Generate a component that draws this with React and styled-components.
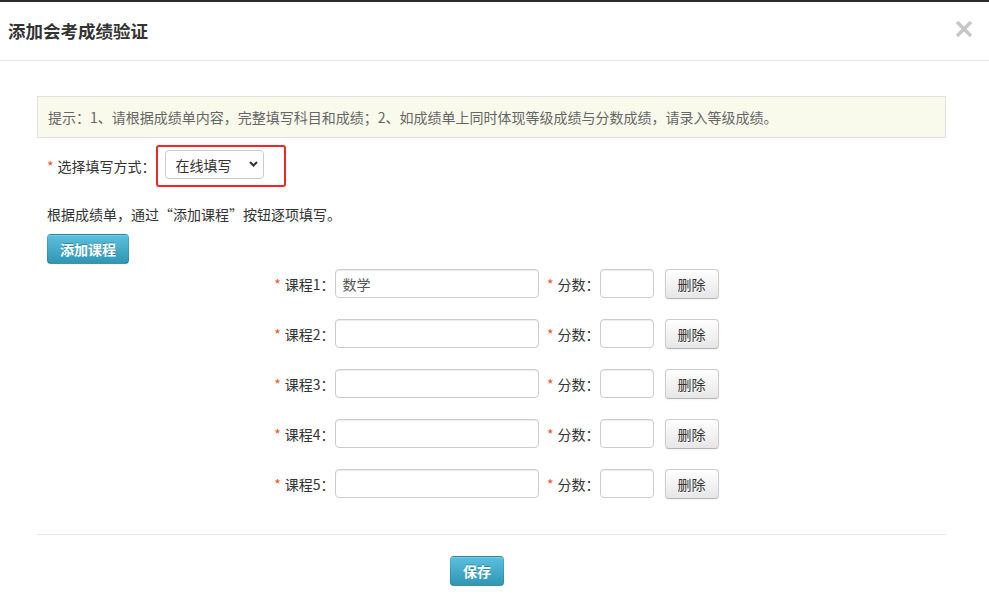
import React from 'react';
import styled, { createGlobalStyle, css } from 'styled-components';

const GlobalStyle = createGlobalStyle`
  html, body {
    margin: 0;
    padding: 0;
    background: #fff;
  }
  body {
    font-family: "Noto Sans CJK SC", "Noto Sans", sans-serif;
    font-size: 14px;
    color: #333;
  }
  * {
    box-sizing: border-box;
  }
`

const Modal = styled.div`
  width: 989px;
  height: 610px;
  background: #fff;
  border-top: 2px solid #2b2b2b;
  display: flex;
  flex-direction: column;
`

const Header = styled.div`
  height: 59px;
  border-bottom: 1px solid #e8e8e8;
  display: flex;
  align-items: center;
  justify-content: space-between;
  padding: 0 16px 0 8px;
`

const Title = styled.h3`
  margin: 0;
  font-size: 17.5px;
  font-weight: bold;
  color: #333;
  line-height: 24px;
`

const Close = styled.button`
  border: 0;
  background: transparent;
  padding: 0;
  margin-top: -4px;
  width: 18px;
  height: 18px;
  display: flex;
  cursor: pointer;
`

const Body = styled.div`
  padding: 35px 43px 0 37px;
`

const Tip = styled.div`
  height: 42px;
  line-height: 40px;
  padding: 0 10px;
  border: 1px solid #e2e2e2;
  background: #fafaec;
  color: #666;
  font-size: 14px;
`

const Form = styled.div`
  padding-left: 10px;
`

const ModeRow = styled.div`
  margin-top: 7px;
  display: flex;
  align-items: center;
`

const Label = styled.label`
  color: #333;
  font-size: 14px;
  white-space: nowrap;
  ${({ $width }) => $width && css`
    width: ${$width}px;
    text-align: right;
  `}
`

const Star = styled.span`
  color: #ee5522;
  margin-right: 4px;
`

const Highlight = styled.div`
  border: 2px solid #f02828;
  border-radius: 3px;
  padding: 3px 20px 6px 7px;
`

const SelectWrap = styled.div`
  position: relative;
  width: 99px;
  height: 29px;
`

const Select = styled.select`
  appearance: none;
  width: 100%;
  height: 100%;
  border: 1px solid #ccc;
  border-radius: 4px;
  background: #fff;
  padding: 0 0 0 10px;
  font-family: inherit;
  font-size: 14px;
  color: #333;
  outline: none;
`

const Chevron = styled.svg`
  position: absolute;
  right: 6px;
  top: 10px;
  pointer-events: none;
`

const Hint = styled.p`
  margin: 17px 0 0;
  line-height: 20px;
  font-size: 14px;
  color: #333;
`

const Button = styled.button`
  display: inline-flex;
  align-items: center;
  justify-content: center;
  width: ${({ $w }) => $w}px;
  height: 30px;
  padding: 0;
  border: 1px solid;
  border-radius: 4px;
  font-family: inherit;
  font-size: 14px;
  cursor: pointer;
  box-shadow: inset 0 1px 0 rgba(255,255,255,.2), 0 1px 2px rgba(0,0,0,.05);
  ${({ $variant }) => $variant === 'info' ? css`
    color: #fff;
    font-weight: bold;
    background: linear-gradient(to bottom, #5bc0de, #2f96b4);
    border-color: rgba(0,0,0,.1) rgba(0,0,0,.1) rgba(0,0,0,.25);
    text-shadow: 0 -1px 0 rgba(0,0,0,.25);
  ` : css`
    color: #333;
    background: linear-gradient(to bottom, #fff, #e6e6e6);
    border-color: #ccc #ccc #b3b3b3;
    text-shadow: 0 1px 1px rgba(255,255,255,.75);
  `}
`

const AddButton = styled(Button)`
  margin-top: 10px;
`

const CourseList = styled.div`
  margin-top: 5px;
  display: flex;
  flex-direction: column;
  align-items: center;
  gap: 21px;
`

const CourseRow = styled.div`
  display: flex;
  align-items: center;
  height: 29px;
`

const Input = styled.input`
  width: ${({ $w }) => $w}px;
  height: 29px;
  border: 1px solid #ccc;
  border-radius: 4px;
  padding: 0 7px;
  font-family: inherit;
  font-size: 14px;
  color: #555;
  box-shadow: inset 0 1px 1px rgba(0,0,0,.075);
  outline: none;
`

const DeleteButton = styled(Button)`
  margin-left: 11px;
  margin-top: 1px;
`

const Footer = styled.div`
  margin-top: 36px;
  border-top: 1px solid #e8e8e8;
  padding: 21px 0 0 413px;
`

const courses = ['数学', '', '', '', '']

const App = () => {
  return (
    <>
      <GlobalStyle />
      <Modal>
        <Header>
          <Title>添加会考成绩验证</Title>
          <Close aria-label="关闭">
            <svg width="18" height="18" viewBox="0 0 18 18">
              <path d="M2 2 16 16M16 2 2 16" stroke="#c6c6c6" strokeWidth="3.6" />
            </svg>
          </Close>
        </Header>
        <Body>
          <Tip>提示：1、请根据成绩单内容，完整填写科目和成绩；2、如成绩单上同时体现等级成绩与分数成绩，请录入等级成绩。</Tip>
          <Form>
            <ModeRow>
              <Label><Star>*</Star>选择填写方式：</Label>
              <Highlight>
                <SelectWrap>
                  <Select defaultValue="online">
                    <option value="online">在线填写</option>
                  </Select>
                  <Chevron width="9" height="8" viewBox="0 0 9 8">
                    <path d="M1 2 4.5 5.5 8 2" fill="none" stroke="#333" strokeWidth="2" />
                  </Chevron>
                </SelectWrap>
              </Highlight>
            </ModeRow>
            <Hint>根据成绩单，通过“添加课程”按钮逐项填写。</Hint>
            <AddButton $variant="info" $w={82}>添加课程</AddButton>
          </Form>
          <CourseList>
            {courses.map((name, i) => (
              <CourseRow key={i}>
                <Label $width={70}><Star>*</Star>课程{i + 1}：</Label>
                <Input $w={204} defaultValue={name} />
                <Label $width={61}><Star>*</Star>分数：</Label>
                <Input $w={54} />
                <DeleteButton $w={54}>删除</DeleteButton>
              </CourseRow>
            ))}
          </CourseList>
          <Footer>
            <Button $variant="info" $w={54}>保存</Button>
          </Footer>
        </Body>
      </Modal>
    </>
  )
}

export default App;
